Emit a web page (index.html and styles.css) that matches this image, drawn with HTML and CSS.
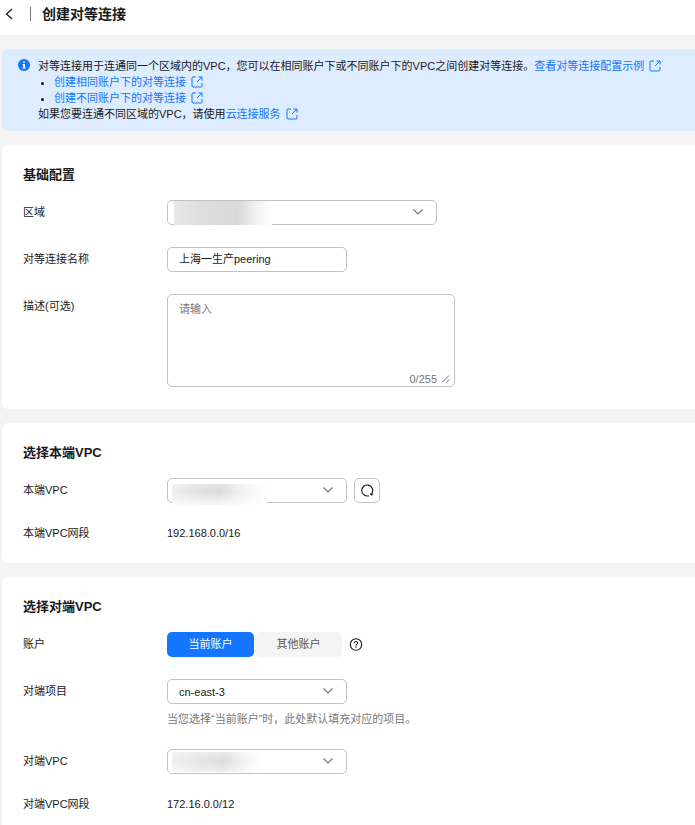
FILE: index.html
```html
<!DOCTYPE html>
<html lang="zh-CN">
<head>
  <meta charset="UTF-8">
  <meta name="viewport" content="width=device-width, initial-scale=1.0">
  <title>创建对等连接</title>
  <link rel="stylesheet" href="styles.css">
</head>
<body>
  <svg class="sprite" aria-hidden="true">
    <symbol id="icon-external" viewBox="0 0 12 12">
      <path d="M5 1H2Q1 1 1 2v8q0 1 1 1h8q1 0 1-1V7M7.500 1H11v3.500M11 1L6 6" fill="none" stroke="currentColor"/>
    </symbol>
    <symbol id="icon-down" viewBox="0 0 12 12">
      <path d="M1.500 3.500L6 8l4.500-4.500" fill="none" stroke="currentColor" stroke-width="1.200"/>
    </symbol>
  </svg>

  <header class="page-header">
    <button class="back" type="button" aria-label="返回">
      <svg width="8" height="12" viewBox="0 0 8 12"><path d="M7 1L1.500 6 7 11" fill="none" stroke="currentColor" stroke-width="1.300"/></svg>
    </button>
    <span class="divider"></span>
    <h1>创建对等连接</h1>
  </header>

  <main>
    <div class="alert">
      <svg class="alert-icon" width="12" height="12" viewBox="0 0 12 12">
        <circle cx="6" cy="6" r="6" fill="#1476ff"/>
        <path d="M5 2.500h2v1.300H5zM4.500 5H7v3.700h.8v.8H4.300v-.8h.9V5.800h-.7z" fill="#fff"/>
      </svg>
      <div class="alert-text">
        <p>对等连接用于连通同一个区域内的VPC，您可以在相同账户下或不同账户下的VPC之间创建对等连接。<a href="#">查看对等连接配置示例<svg class="external"><use href="#icon-external"/></svg></a></p>
        <ul>
          <li><a href="#">创建相同账户下的对等连接<svg class="external"><use href="#icon-external"/></svg></a></li>
          <li><a href="#">创建不同账户下的对等连接<svg class="external"><use href="#icon-external"/></svg></a></li>
        </ul>
        <p>如果您要连通不同区域的VPC，请使用<a href="#">云连接服务<svg class="external"><use href="#icon-external"/></svg></a></p>
      </div>
    </div>

    <section class="card">
      <h2>基础配置</h2>
      <div class="row">
        <label for="region">区域</label>
        <div class="select wide">
          <select id="region"><option></option></select>
          <span class="mask mask-region"></span>
          <svg class="arrow"><use href="#icon-down"/></svg>
        </div>
      </div>
      <div class="row">
        <label for="name">对等连接名称</label>
        <input class="text" type="text" id="name" value="上海一生产peering">
      </div>
      <div class="row">
        <label for="desc">描述(可选)</label>
        <div class="textarea">
          <textarea id="desc" maxlength="255" placeholder="请输入"></textarea>
          <span class="count">0/255
            <svg width="8" height="8" viewBox="0 0 8 8"><path d="M.500 7L7 .500M4.500 7.500L7.500 4.500" fill="none" stroke="currentColor"/></svg>
          </span>
        </div>
      </div>
    </section>

    <section class="card">
      <h2>选择本端VPC</h2>
      <div class="row">
        <label for="local-vpc">本端VPC</label>
        <div class="select">
          <select id="local-vpc"><option></option></select>
          <span class="mask mask-local"></span>
          <svg class="arrow"><use href="#icon-down"/></svg>
        </div>
        <button class="refresh" type="button" aria-label="刷新">
          <svg width="14" height="14" viewBox="0 0 14 14">
            <path d="M9 11.700A5.500 5.500 0 1 1 12 9.200" fill="none" stroke="currentColor" stroke-width="1.100"/>
            <path d="M9.600 9.200l4 .2-2.200 2.600z" fill="currentColor"/>
          </svg>
        </button>
      </div>
      <div class="row plain">
        <span class="label">本端VPC网段</span>
        <span>192.168.0.0/16</span>
      </div>
    </section>

    <section class="card">
      <h2>选择对端VPC</h2>
      <div class="row">
        <span class="label">账户</span>
        <div class="tabs">
          <button class="tab active" type="button">当前账户</button>
          <button class="tab" type="button">其他账户</button>
        </div>
        <svg class="help" width="14" height="14" viewBox="0 0 14 14">
          <circle cx="7" cy="6.500" r="5.700" fill="none" stroke="currentColor" stroke-width="1.100"/>
          <path d="M5.300 5.200Q5.400 3.500 7 3.500t1.700 1.500C8.700 6.200 7 6.100 7 7.700M7 8.500v1.200" fill="none" stroke="currentColor" stroke-width="1.100"/>
        </svg>
      </div>
      <div class="row">
        <label for="project">对端项目</label>
        <div>
          <div class="select">
            <select id="project"><option>cn-east-3</option></select>
            <svg class="arrow"><use href="#icon-down"/></svg>
          </div>
          <p class="hint">当您选择“当前账户”时，此处默认填充对应的项目。</p>
        </div>
      </div>
      <div class="row">
        <label for="peer-vpc">对端VPC</label>
        <div class="select">
          <select id="peer-vpc"><option></option></select>
          <span class="mask mask-peer"></span>
          <svg class="arrow"><use href="#icon-down"/></svg>
        </div>
      </div>
      <div class="row plain">
        <span class="label">对端VPC网段</span>
        <span>172.16.0.0/12</span>
      </div>
    </section>
  </main>
</body>
</html>
```
FILE: styles.css
```css
* {
  box-sizing: border-box;
}
body {
  margin: 0;
  background-color: #f4f4f4;
  color: #191919;
  font-family: "Liberation Sans", "Noto Sans CJK SC", sans-serif;
  font-size: 11px;
  line-height: 16px;
}
h1, h2, p, ul {
  margin: 0;
}
button, input, select, textarea {
  font: inherit;
  color: inherit;
}
a {
  color: #1476ff;
  text-decoration: none;
}
.sprite {
  position: absolute;
  width: 0;
  height: 0;
}

/* header */
.page-header {
  display: flex;
  align-items: center;
  padding: 4px 5px 11px;
  background-color: #fff;
}
.page-header h1 {
  font-size: 14px;
  line-height: 20px;
}
.back {
  display: flex;
  padding: 0;
  border: none;
  background: none;
  cursor: pointer;
}
.divider {
  width: 1px;
  height: 14px;
  margin: 0 11px 0 17px;
  background-color: #777;
}

main {
  display: flex;
  flex-direction: column;
  gap: 14px;
  padding: 14px 0 0 2px;
}

/* notice */
.alert {
  display: flex;
  gap: 8px;
  padding: 9px 16px;
  border-radius: 6px 0 0 6px;
  background-color: #deecff;
}
.alert-icon {
  flex: none;
  margin-top: 1px;
}
.alert ul {
  padding-left: 16px;
}
.external {
  width: 12px;
  height: 12px;
  margin-left: 5px;
  vertical-align: -2px;
}

/* form cards */
.card {
  padding: 21px 21px 22px;
  border-radius: 6px 0 0 6px;
  background-color: #fff;
}
.card h2 {
  margin-bottom: 16px;
  font-size: 13px;
  line-height: 18px;
}
.row {
  display: flex;
  align-items: flex-start;
  line-height: 25px;
}
.row + .row {
  margin-top: 22px;
}
.row.plain {
  line-height: 16px;
}
.row label,
.row .label {
  flex: none;
  width: 144px;
}
.select {
  position: relative;
  width: 180px;
  height: 25px;
}
.select.wide {
  width: 270px;
}
.select select,
.text,
.textarea textarea {
  display: block;
  border: 1px solid #c2c2c2;
  border-radius: 5px;
  background-color: #fff;
  outline: none;
}
.select select {
  appearance: none;
  width: 100%;
  height: 25px;
  padding: 0 32px 0 11px;
}
.arrow {
  position: absolute;
  top: 6px;
  right: 13px;
  width: 12px;
  height: 12px;
  color: #777;
  pointer-events: none;
}
.text {
  width: 180px;
  height: 25px;
  padding: 0 11px;
}

/* hidden values */
.mask {
  position: absolute;
  left: 5px;
  pointer-events: none;
}
.mask-region {
  top: 1px;
  left: 7px;
  width: 98px;
  height: 24px;
  background: linear-gradient(90deg, #e8e8e8, #dedede 30%, #d9d9d9 65%, #f0f0f0 82%, #fff);
}
.mask-local {
  top: 6px;
  width: 95px;
  height: 21px;
  background:
    linear-gradient(rgba(255, 255, 255, 0.2), rgba(255, 255, 255, 0) 40%, rgba(255, 255, 255, 0.8)),
    linear-gradient(90deg, #efefef, #e2e2e2 25%, #dbdbdb 50%, #f3f3f3 75%, #fff);
}
.mask-peer {
  top: 3px;
  width: 88px;
  height: 20px;
  background:
    linear-gradient(rgba(255, 255, 255, 0.4), rgba(255, 255, 255, 0) 45%, rgba(255, 255, 255, 0.5)),
    linear-gradient(90deg, #efefef, #e4e4e4 30%, #dcdcdc 60%, #f3f3f3 82%, #fff);
}

.textarea {
  position: relative;
  width: 288px;
}
.textarea textarea {
  width: 100%;
  height: 93px;
  padding: 6px 11px;
  line-height: 16px;
  resize: none;
}
.textarea textarea::placeholder {
  color: #777;
}
.count {
  position: absolute;
  right: 5px;
  bottom: 0;
  display: flex;
  align-items: center;
  gap: 5px;
  color: #777;
  line-height: 16px;
}
.refresh {
  display: flex;
  align-items: center;
  justify-content: center;
  width: 26px;
  height: 25px;
  margin-left: 7px;
  padding: 0;
  border: 1px solid #c2c2c2;
  border-radius: 5px;
  background-color: #fff;
  cursor: pointer;
}
.tabs {
  display: flex;
  gap: 1px;
}
.tab {
  width: 87px;
  height: 25px;
  padding: 0;
  border: none;
  border-radius: 5px;
  background-color: #f4f4f4;
  color: #595959;
  cursor: pointer;
}
.tab.active {
  background-color: #1476ff;
  color: #fff;
}
.help {
  align-self: center;
  margin-left: 7px;
}
.hint {
  margin-top: 7px;
  color: #777;
  line-height: 16px;
}
```
